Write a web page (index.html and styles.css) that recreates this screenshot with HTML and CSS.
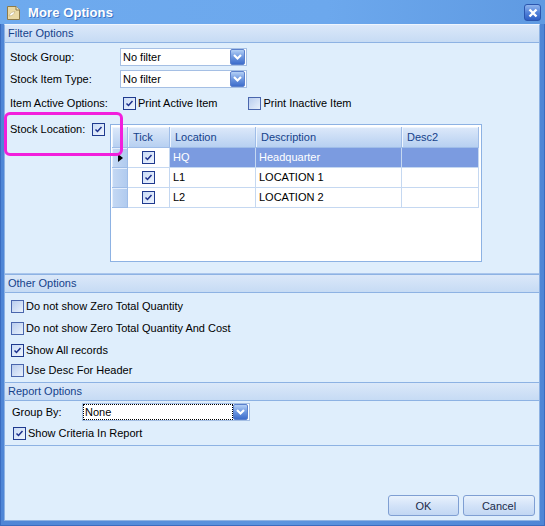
FILE: index.html
```html
<!DOCTYPE html>
<html>
<head>
<meta charset="utf-8">
<link rel="stylesheet" href="styles.css">
</head>
<body>
<div class="window">
  <div class="titlebar">
    <svg class="app-icon" width="15" height="16" viewBox="0 0 15 16">
      <path d="M1.5 1.5 H10 L13.5 5 V14.5 H1.5 Z" fill="#e9d9a6" stroke="#8c7a4a"/>
      <path d="M10 1.5 V5 H13.5" fill="#f6edcf" stroke="#8c7a4a"/>
      <path d="M3 11 C4 8 6 7 9 6.5 C8 9 6.5 11 3 11 Z" fill="#ffffff" stroke="#b9a878" stroke-width="0.6"/>
    </svg>
    <span class="title">More Options</span>
    <span class="close">
      <svg width="10" height="10" viewBox="0 0 10 10"><path d="M1.5 1.5 L8.5 8.5 M8.5 1.5 L1.5 8.5" stroke="#ffffff" stroke-width="2.4"/></svg>
    </span>
  </div>
  <div class="client">
    <section class="group">
      <div class="ghead">Filter Options</div>
      <div class="gbody filter-body">
        <div class="frow">
          <span class="flabel">Stock Group:</span>
          <div class="combo"><span class="ctext">No filter</span><span class="cbtn"><svg width="11" height="8" viewBox="0 0 11 8"><path d="M2 2 L5.5 5.5 L9 2" fill="none" stroke="#fff" stroke-width="2.2"/></svg></span></div>
        </div>
        <div class="frow row2">
          <span class="flabel">Stock Item Type:</span>
          <div class="combo"><span class="ctext">No filter</span><span class="cbtn"><svg width="11" height="8" viewBox="0 0 11 8"><path d="M2 2 L5.5 5.5 L9 2" fill="none" stroke="#fff" stroke-width="2.2"/></svg></span></div>
        </div>
        <div class="frow row3">
          <span class="flabel">Item Active Options:</span>
          <span class="opt opt-first"><span class="cb on"><svg width="11" height="11" viewBox="0 0 11 11"><path d="M2.5 5.5 L4.5 7.5 L8.5 3" fill="none" stroke="#1b2f8c" stroke-width="1.5"/></svg></span>Print Active Item</span>
          <span class="opt opt-second"><span class="cb"></span>Print Inactive Item</span>
        </div>
        <div class="locrow">
          <span class="loclabel">Stock Location:</span>
          <span class="cb on"><svg width="11" height="11" viewBox="0 0 11 11"><path d="M2.5 5.5 L4.5 7.5 L8.5 3" fill="none" stroke="#1b2f8c" stroke-width="1.5"/></svg></span>
          <div class="grid">
            <div class="gtable">
              <div class="hc corner"></div>
              <div class="hc">Tick</div>
              <div class="hc">Location</div>
              <div class="hc">Description</div>
              <div class="hc">Desc2</div>

              <div class="rh"><svg width="5" height="8" viewBox="0 0 5 8"><path d="M0 0 L5 4 L0 8 Z" fill="#000"/></svg></div>
              <div class="dc tick"><span class="cb on"><svg width="11" height="11" viewBox="0 0 11 11"><path d="M2.5 5.5 L4.5 7.5 L8.5 3" fill="none" stroke="#1b2f8c" stroke-width="1.5"/></svg></span></div>
              <div class="dc sel">HQ</div>
              <div class="dc sel">Headquarter</div>
              <div class="dc sel"></div>

              <div class="rh"></div>
              <div class="dc tick"><span class="cb on"><svg width="11" height="11" viewBox="0 0 11 11"><path d="M2.5 5.5 L4.5 7.5 L8.5 3" fill="none" stroke="#1b2f8c" stroke-width="1.5"/></svg></span></div>
              <div class="dc">L1</div>
              <div class="dc">LOCATION 1</div>
              <div class="dc"></div>

              <div class="rh"></div>
              <div class="dc tick"><span class="cb on"><svg width="11" height="11" viewBox="0 0 11 11"><path d="M2.5 5.5 L4.5 7.5 L8.5 3" fill="none" stroke="#1b2f8c" stroke-width="1.5"/></svg></span></div>
              <div class="dc">L2</div>
              <div class="dc">LOCATION 2</div>
              <div class="dc"></div>
            </div>
          </div>
        </div>
      </div>
    </section>
    <section class="group">
      <div class="ghead">Other Options</div>
      <div class="gbody other-body">
        <div class="crow"><span class="cb"></span>Do not show Zero Total Quantity</div>
        <div class="crow"><span class="cb"></span>Do not show Zero Total Quantity And Cost</div>
        <div class="crow"><span class="cb on"><svg width="11" height="11" viewBox="0 0 11 11"><path d="M2.5 5.5 L4.5 7.5 L8.5 3" fill="none" stroke="#1b2f8c" stroke-width="1.5"/></svg></span>Show All records</div>
        <div class="crow last"><span class="cb"></span>Use Desc For Header</div>
      </div>
    </section>
    <section class="group">
      <div class="ghead">Report Options</div>
      <div class="gbody report-body">
        <div class="frow">
          <span class="rlabel">Group By:</span>
          <div class="combo wide"><span class="ctext focus">None</span><span class="cbtn"><svg width="11" height="8" viewBox="0 0 11 8"><path d="M2 2 L5.5 5.5 L9 2" fill="none" stroke="#fff" stroke-width="2.2"/></svg></span></div>
        </div>
        <div class="crow rcrow"><span class="cb on"><svg width="11" height="11" viewBox="0 0 11 11"><path d="M2.5 5.5 L4.5 7.5 L8.5 3" fill="none" stroke="#1b2f8c" stroke-width="1.5"/></svg></span>Show Criteria In Report</div>
      </div>
    </section>
    <div class="buttons">
      <button class="btn ok">OK</button>
      <button class="btn cancel">Cancel</button>
    </div>
  </div>
  <div class="highlight"></div>
</div>
</body>
</html>
```

FILE: styles.css
```css
html, body {
  margin: 0;
  padding: 0;
  background: #ffffff;
}
body {
  font-family: "Liberation Sans", Arial, sans-serif;
  font-size: 11px;
  color: #000;
}
.window {
  position: relative;
  width: 545px;
  height: 526px;
  box-sizing: border-box;
  background: linear-gradient(to right, #4f86d6, #5c95df 50%, #4f86d6);
  border: 1px solid #3a6cc0;
  display: flex;
  flex-direction: column;
}
.titlebar {
  height: 24px;
  flex: none;
  display: flex;
  align-items: center;
  background: linear-gradient(to right, #6eaaee, #6ca8ed 60%, #5f9ae2);
  margin: -1px -1px 0 -1px;
  padding-left: 6px;
  padding-right: 4px;
}
.app-icon {
  flex: none;
  margin-top: 1px;
}
.title {
  margin-left: 7px;
  font-weight: bold;
  font-size: 13px;
  color: #ffffff;
  text-shadow: 1px 1px 0 #3f74c4;
  letter-spacing: 0.1px;
}
.close {
  margin-left: auto;
  width: 15px;
  height: 15px;
  border: 1px solid #2b56ae;
  border-radius: 3px;
  background: linear-gradient(#8fb4ee, #4f7fd8 55%, #2f5fc4);
  display: flex;
  align-items: center;
  justify-content: center;
  margin-top: 1px;
}
.client {
  flex: 1;
  margin: 0 4px 4px 3px;
  background: #dfeefc;
  border: 1px solid #8db2e3;
  border-top: 1px solid #eef5fe;
  display: flex;
  flex-direction: column;
}
.group + .group {
  border-top: 1px solid #8db2e3;
}
.ghead {
  height: 17px;
  line-height: 17px;
  padding-left: 3px;
  color: #15428b;
  background: linear-gradient(#dbe8f9, #c6dbf4);
  border-bottom: 1px solid #8db2e3;
}
.gbody {
  box-sizing: border-box;
}
.filter-body {
  height: 231px;
  padding: 5px 0 0 5px;
  border-bottom: 1px solid #aac6ec;
}
.other-body {
  height: 89px;
  padding: 5px 0 0 6px;
}
.report-body {
  height: 45px;
  padding: 2px 0 0 7px;
  border-bottom: 1px solid #8db2e3;
}
.frow {
  display: flex;
  align-items: center;
  height: 18px;
}
.row2 {
  margin-top: 4px;
}
.row3 {
  margin-top: 7px;
  height: 16px;
}
.flabel {
  width: 110px;
  flex: none;
}
.rlabel {
  width: 70px;
  flex: none;
}
.combo {
  width: 127px;
  height: 18px;
  box-sizing: border-box;
  border: 1px solid #a5bfe4;
  background: #ffffff;
  display: flex;
  align-items: center;
  padding: 1px 1px 1px 1px;
}
.combo.wide {
  width: 168px;
}
.ctext {
  flex: 1;
  padding-left: 1px;
  line-height: 14px;
  height: 14px;
  box-sizing: border-box;
}
.ctext.focus {
  outline: 1px dotted #000;
  outline-offset: 0;
  margin-right: 1px;
}
.cbtn {
  flex: none;
  width: 15px;
  height: 16px;
  box-sizing: border-box;
  border: 1px solid #5b80cc;
  border-radius: 2px;
  background: linear-gradient(#b4d0f6, #6d97e0 50%, #3e6dcb);
  display: flex;
  align-items: center;
  justify-content: center;
}
.cb {
  flex: none;
  width: 13px;
  height: 13px;
  box-sizing: border-box;
  border: 1px solid #4a66ad;
  background: linear-gradient(135deg, #b9cdee, #e9f1fc);
  display: inline-flex;
  align-items: center;
  justify-content: center;
}
.cb.on {
  border-color: #1f3a8e;
  background: linear-gradient(135deg, #c9dbf6, #eef4fd);
}
.opt {
  display: flex;
  align-items: center;
}
.opt .cb {
  margin-right: 2px;
}
.opt-first {
  margin-left: 3px;
}
.opt-second {
  margin-left: 31px;
}
.locrow {
  display: flex;
  align-items: flex-start;
  margin-top: 12px;
}
.loclabel {
  width: 82px;
  flex: none;
  line-height: 13px;
}
.grid {
  margin-left: 5px;
  margin-top: 1px;
  width: 372px;
  height: 138px;
  box-sizing: border-box;
  border: 1px solid #8db2e3;
  padding: 2px 1px 1px 1px;
  background: #ffffff;
}
.gtable {
  display: grid;
  grid-template-columns: 16px 42px 86px 146px 77px;
  grid-template-rows: 21px 20px 20px 20px;
}
.hc {
  box-sizing: border-box;
  background: linear-gradient(#dde9fa, #b7d0f1);
  border-right: 1px solid #9fbde8;
  border-bottom: 1px solid #9fbde8;
  box-shadow: inset 1px 1px 0 #eef5fe;
  color: #15428b;
  line-height: 20px;
  padding-left: 5px;
}
.hc.corner {
  padding: 0;
}
.rh {
  box-sizing: border-box;
  background: linear-gradient(to right, #c5d9f4, #b1cbef);
  border-right: 1px solid #9fbde8;
  border-bottom: 1px solid #9fbde8;
  box-shadow: inset 1px 1px 0 #e4eefc;
  display: flex;
  align-items: center;
  justify-content: center;
}
.rh svg {
  margin-left: 1px;
}
.dc {
  box-sizing: border-box;
  border-right: 1px solid #c5d8f1;
  border-bottom: 1px solid #c5d8f1;
  line-height: 19px;
  padding-left: 3px;
  background: #ffffff;
  white-space: nowrap;
}
.dc.sel {
  background: #7b9be0;
  color: #ffffff;
}
.dc.tick {
  display: flex;
  align-items: center;
  justify-content: center;
  padding: 0;
}
.crow {
  display: flex;
  align-items: center;
  height: 16px;
  margin-bottom: 6px;
}
.crow .cb {
  margin-right: 2px;
}
.crow.last {
  margin-top: -2px;
}
.rcrow {
  margin-top: 4px;
  padding-left: 1px;
}
.buttons {
  flex: 1;
  display: flex;
  justify-content: flex-end;
  align-items: flex-end;
  gap: 4px;
  padding: 0 4px 4px 0;
}
.btn {
  height: 21px;
  box-sizing: border-box;
  border: 1px solid #7f9fd3;
  border-radius: 3px;
  background: linear-gradient(#e9f2fd, #d3e3f8 50%, #c2d7f3);
  font-family: "Liberation Sans", Arial, sans-serif;
  font-size: 11px;
  color: #1b2c4a;
  padding: 0;
}
.btn.ok {
  width: 71px;
}
.btn.cancel {
  width: 72px;
}
.highlight {
  position: absolute;
  left: 3px;
  top: 111px;
  width: 119px;
  height: 44px;
  box-sizing: border-box;
  border: 3px solid #f21fdc;
  border-radius: 6px;
  pointer-events: none;
}
```
